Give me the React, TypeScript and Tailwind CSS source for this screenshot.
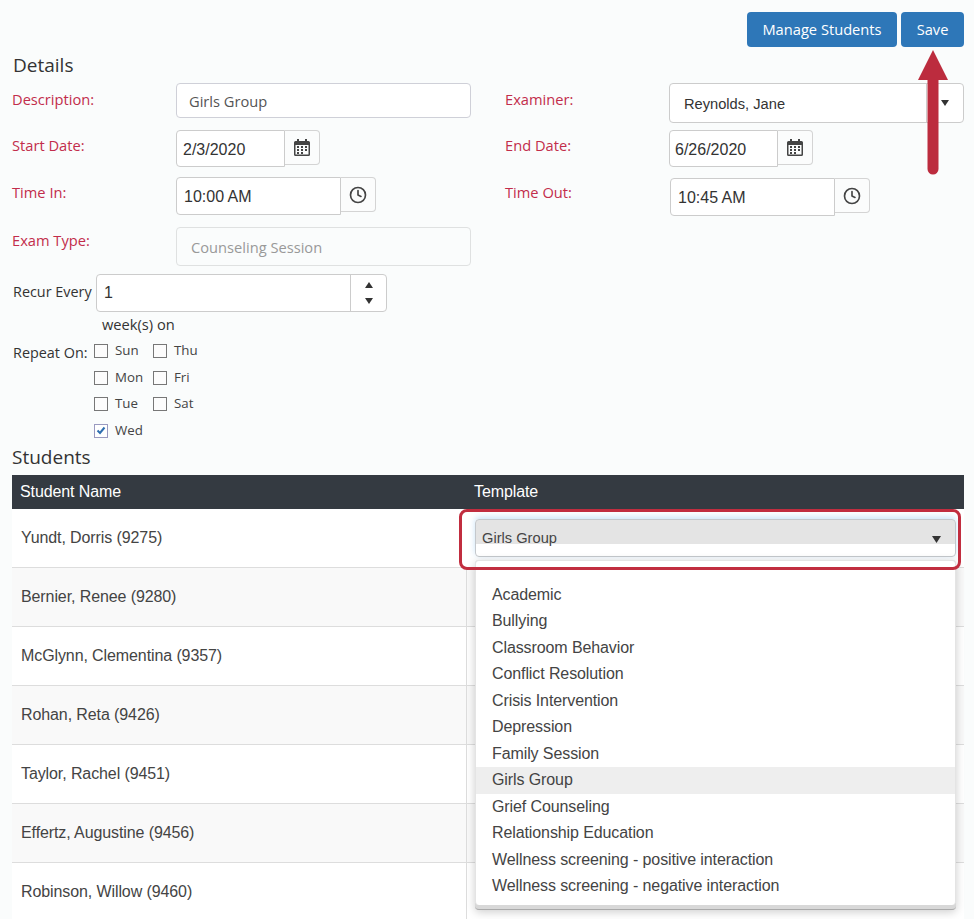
import { Clock } from 'lucide-react';
import type { ReactNode } from 'react';

const students = [
  'Yundt, Dorris (9275)',
  'Bernier, Renee (9280)',
  'McGlynn, Clementina (9357)',
  'Rohan, Reta (9426)',
  'Taylor, Rachel (9451)',
  'Effertz, Augustine (9456)',
  'Robinson, Willow (9460)',
];

const templates = [
  'Academic',
  'Bullying',
  'Classroom Behavior',
  'Conflict Resolution',
  'Crisis Intervention',
  'Depression',
  'Family Session',
  'Girls Group',
  'Grief Counseling',
  'Relationship Education',
  'Wellness screening - positive interaction',
  'Wellness screening - negative interaction',
];

function CalendarIcon() {
  return (
    <svg width="16" height="17" viewBox="0 0 16 17" className="text-[#444]">
      <path
        fill="currentColor"
        fillRule="evenodd"
        d="M3 0h2v2h6V0h2v2h1.500A1.500 1.500 0 0 1 16 3.500v12a1.500 1.500 0 0 1-1.500 1.500h-13A1.500 1.500 0 0 1 0 15.500v-12A1.500 1.500 0 0 1 1.500 2H3V0ZM1.500 6v9.500h13V6h-13Z"
      />
      <path
        fill="currentColor"
        d="M3 7h2v2H3zM7 7h2v2H7zM11 7h2v2h-2zM3 10h2v2H3zM7 10h2v2H7zM11 10h2v2h-2zM3 13h2v2H3zM7 13h2v2H7z"
      />
    </svg>
  );
}

function Label({ children, className }: { children: ReactNode; className: string }) {
  return <label className={`w-[164px] shrink-0 text-[14.670px] leading-5 text-[#c22d4b] ${className}`}>{children}</label>;
}

function PickerInput({ value, inputClass, children }: { value: string; inputClass: string; children: ReactNode }) {
  return (
    <div className="flex items-start">
      <div className={`flex items-center rounded-l-[4px] border border-[#ccc] bg-white font-['Liberation_Sans',sans-serif] text-base text-[#333] ${inputClass}`}>
        {value}
      </div>
      <div className="flex h-[35px] w-[35px] items-center justify-center rounded-r-[4px] border border-l-0 border-[#d4d4d4] bg-[#fbfcfc]">
        {children}
      </div>
    </div>
  );
}

function Day({ label, checked }: { label: string; checked?: boolean }) {
  return (
    <div className="flex h-[26.500px] items-center">
      <span className={`flex h-[14px] w-[14px] items-center justify-center border ${checked ? 'border-[#9a9ac0] bg-white' : 'border-[#777] bg-[#fcfcfc]'}`}>
        {checked && (
          <svg width="10" height="9" viewBox="0 0 10 9">
            <path d="M1.500 4.500 4 7l4.500-5.500" fill="none" stroke="#2f6fb0" strokeWidth="2" />
          </svg>
        )}
      </span>
      <span className="ml-[7px] text-[13.300px] text-[#444]">{label}</span>
    </div>
  );
}

export default function App() {
  return (
    <div className="relative h-[919px] overflow-hidden bg-[#fafcfc] font-['Open_Sans',sans-serif] text-[#333]">
      <div className="flex justify-end gap-1 pr-[10px] pt-3">
        <button className="h-[35px] w-[150px] rounded-[4px] bg-[#2e77b8] pb-[2px] text-[14.670px] text-white">Manage Students</button>
        <button className="h-[35px] w-[63px] rounded-[4px] bg-[#2e77b8] pb-[2px] text-[14.670px] text-white">Save</button>
      </div>

      <h2 className="ml-[13px] h-[36px] text-[19px] leading-[36px] text-[#333]">Details</h2>

      <div className="flex">
        <div className="w-[493px] shrink-0 pl-3">
          <div className="flex items-start">
            <Label className="pt-[6px]">Description:</Label>
            <div className="flex h-[35px] w-[295px] items-center rounded-[4px] border border-[#cfd0d8] bg-white pl-3 text-[14.670px] text-[#555]">Girls Group</div>
          </div>
          <div className="mt-3 flex items-start">
            <Label className="pt-[5px]">Start Date:</Label>
            <PickerInput value="2/3/2020" inputClass="h-[37px] w-[109px] pl-1.5 pt-[3px]">
              <CalendarIcon />
            </PickerInput>
          </div>
          <div className="mt-[10px] flex items-start">
            <Label className="pt-[5px]">Time In:</Label>
            <PickerInput value="10:00 AM" inputClass="h-[38px] w-[165px] pl-[7px] pt-px">
              <Clock size={18} strokeWidth={2.2} className="text-[#444]" />
            </PickerInput>
          </div>
          <div className="mt-3 flex items-start">
            <Label className="pt-[3px]">Exam Type:</Label>
            <div className="flex h-[39px] w-[295px] items-center rounded-[4px] border border-[#dfe1e1] pl-[14px] text-[14.670px] text-[#999]">Counseling Session</div>
          </div>
          <div className="mt-2 flex items-start">
            <span className="ml-px w-[83px] shrink-0 pt-2 text-[14.400px] leading-5">Recur Every</span>
            <div className="flex h-[38px] w-[291px] rounded-[4px] border border-[#ccc] bg-white font-['Liberation_Sans',sans-serif] text-base">
              <span className="flex flex-1 items-center pl-[7px]">1</span>
              <span className="flex w-9 flex-col items-center justify-center gap-[10px] border-l border-[#ccc]">
                <svg width="8" height="6" viewBox="0 0 8 6">
                  <path d="M4 0l4 6H0z" fill="#333" />
                </svg>
                <svg width="8" height="6" viewBox="0 0 8 6">
                  <path d="M0 0h8L4 6z" fill="#333" />
                </svg>
              </span>
            </div>
          </div>
          <div className="ml-[90px] mt-[2px] text-[14.670px] leading-5">week(s) on</div>
          <div className="flex items-start">
            <span className="ml-px mt-[9px] w-[81px] shrink-0 text-[14.400px] leading-5">Repeat On:</span>
            <div className="mt-1 grid w-[120px] grid-cols-[59px_1fr]">
              <Day label="Sun" />
              <Day label="Thu" />
              <Day label="Mon" />
              <Day label="Fri" />
              <Day label="Tue" />
              <Day label="Sat" />
              <Day label="Wed" checked />
            </div>
          </div>
        </div>

        <div className="flex-1 pl-3">
          <div className="flex items-start">
            <Label className="pt-[6px]">Examiner:</Label>
            <div className="flex h-10 w-[295px] items-center rounded-[4px] border border-[#ccc] bg-white font-['Liberation_Sans',sans-serif]">
              <span className="flex-1 pl-[14px] pt-px text-[14.670px] text-[#333]">Reynolds, Jane</span>
              <span className="flex h-full w-[37px] items-center justify-center border-l border-[#ccc]">
                <svg width="8" height="6" viewBox="0 0 8 6">
                  <path d="M0 0h8L4 6z" fill="#333" />
                </svg>
              </span>
            </div>
          </div>
          <div className="mt-[7px] flex items-start">
            <Label className="pt-[5px]">End Date:</Label>
            <PickerInput value="6/26/2020" inputClass="h-[37px] w-[109px] pl-[5px] pt-[3px]">
              <CalendarIcon />
            </PickerInput>
          </div>
          <div className="mt-[11px] flex items-start">
            <Label className="pt-1">Time Out:</Label>
            <div className="ml-px">
              <PickerInput value="10:45 AM" inputClass="h-[38px] w-[165px] pl-[7px] pt-px">
                <Clock size={18} strokeWidth={2.2} className="text-[#444]" />
              </PickerInput>
            </div>
          </div>
        </div>
      </div>

      <h2 className="-mt-[2px] ml-3 h-[33px] text-[19px] leading-[30px] text-[#333]">Students</h2>

      <div className="ml-3 mr-[10px] font-['Liberation_Sans',sans-serif] text-base tracking-[-0.1px]">
        <div className="flex h-[34px] items-center bg-[#343a41] text-white">
          <span className="w-[462px] pl-2">Student Name</span>
          <span>Template</span>
        </div>
        {students.map((name, i) => (
          <div key={name} className={`flex h-[59px] border-b border-[#ddd] ${i % 2 === 1 ? 'bg-[#f9f9f9]' : 'bg-white'}`}>
            <span className={`flex w-[455px] items-center pl-[9px] text-[#444] ${i > 0 ? 'border-r border-[#ddd]' : ''}`}>{name}</span>
          </div>
        ))}
      </div>

      {/* open template dropdown */}
      <div className="absolute left-[475px] top-[519px] w-[481px] font-['Liberation_Sans',sans-serif] text-base tracking-[-0.1px] text-[#444]">
        <div className="flex h-[38px] items-start justify-between rounded-[4px] border border-[#c4c8cc] bg-[linear-gradient(#e4e4e4_0,#e4e4e4_24px,#fff_24px)] pl-1.5 pr-[14px] pt-2 shadow-[0_-2px_6px_rgba(102,175,233,0.35)]">
          <span className="text-[14.670px] leading-5 tracking-normal">Girls Group</span>
          <svg width="9" height="7" viewBox="0 0 9 7" className="mt-[8px]">
            <path d="M0 0h9L4.500 7z" fill="#333" />
          </svg>
        </div>
        <div className="mt-[3px] h-[350px] rounded-[4px] border-b border-[#aaa] bg-[#d8d8d8] shadow-[0_2px_10px_rgba(0,0,0,0.2)]">
          <div className="h-[345px] rounded-[4px] border-x border-t border-[#e4e4e4] bg-white pt-[20.500px]">
            {templates.map((t) => (
              <div key={t} className={`flex h-[26.500px] items-center pl-4 ${t === 'Girls Group' ? 'bg-[#eeeeee]' : ''}`}>
                {t}
              </div>
            ))}
          </div>
        </div>
      </div>

      {/* callout box and arrow */}
      <div className="absolute left-[459px] top-[509px] h-[61px] w-[502px] rounded-[8px] border-[3px] border-[#c12d3f]" />
      <svg className="absolute left-[915px] top-[49px]" width="36" height="126" viewBox="0 0 36 126">
        <path d="M18 1 33 31H23.500V120a5.500 5.500 0 0 1-11 0V31H3z" fill="#bc2c3e" />
      </svg>
    </div>
  );
}
